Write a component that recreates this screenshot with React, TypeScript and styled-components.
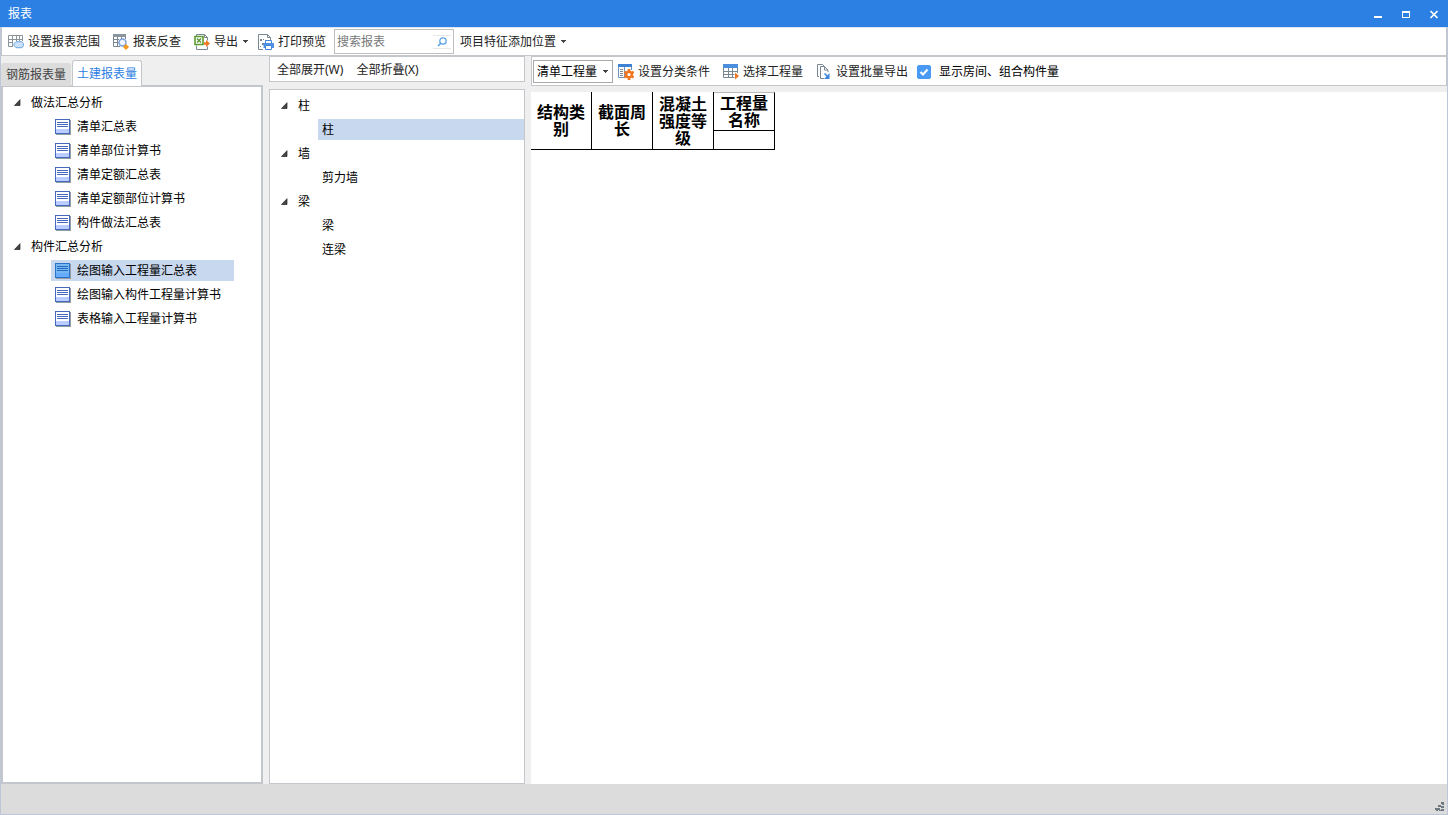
import React, { useState } from 'react';
import styled, { createGlobalStyle } from 'styled-components';

const line = '#c3c7cc';
const frame = '#bfc6d8';
const blue = '#2d80e3';
const highlight = '#c8d8ef';

const GlobalStyle = createGlobalStyle`
  *, *::before, *::after { box-sizing: border-box; }
  body {
    margin: 0;
    background: #efefef;
    color: #000;
    font: 12px/16px "Noto Sans", "Noto Sans CJK SC", sans-serif;
  }
  button, input, select { font: inherit; color: inherit; margin: 0; }
  button { border: 0; background: none; padding: 0; }
  ul { list-style: none; margin: 0; padding: 0; }
  svg { display: block; flex: none; }
`;

const Window = styled.div`
  display: flex;
  flex-direction: column;
  min-height: 100vh;
  border: 1px solid ${frame};
  border-top: 0;
`;

const TitleBar = styled.header`
  display: flex;
  align-items: center;
  justify-content: space-between;
  height: 27px;
  margin: 0 -1px;
  padding: 0 8px;
  background: ${blue};
  color: #fff;
`;

const Title = styled.h1`
  margin: 0;
  font-size: 12px;
  line-height: 16px;
  font-weight: 400;
`;

const WindowButtons = styled.div`
  display: flex;
  gap: 16px;
`;

const WindowButton = styled.button`
  width: 12px;
  height: 14px;
`;

const Toolbar = styled.div`
  display: flex;
  align-items: center;
  gap: 3px;
  height: 29px;
  padding: 0 1px;
  background: #fff;
  border: 1px solid ${line};
  border-top-color: #dfe5ee;
`;

const ToolButton = styled.button<{ $menu?: boolean; $plain?: boolean }>`
  display: flex;
  align-items: center;
  gap: 4px;
  height: 20px;
  padding: 0 ${p => (p.$menu ? 1 : 5)}px 0 ${p => (p.$menu && p.$plain ? 3 : 5)}px;
  color: #222;
  white-space: nowrap;
`;

const SearchBox = styled.form`
  display: flex;
  align-items: center;
  width: 120px;
  height: 25px;
  padding: 0 2px;
  border: 1px solid #bfbfbf;
  background: #fff;
`;

const SearchInput = styled.input`
  flex: 1;
  min-width: 0;
  padding: 0;
  border: 0;
  outline: 0;
  background: none;
  &::placeholder { color: #777; opacity: 1; }
`;

const SearchButton = styled.button`
  display: flex;
  align-items: center;
  justify-content: center;
  width: 18px;
  height: 14px;
  border-top: 1px solid #e8e8e8;
  border-bottom: 1px solid #e8e8e8;
`;

const Main = styled.main`
  flex: 1;
  display: grid;
  grid-template-columns: 262px 256px minmax(0, 1fr);
  column-gap: 6px;
`;

const Column = styled.section`
  display: flex;
  flex-direction: column;
  min-width: 0;
`;

const Tabs = styled.div`
  display: flex;
  align-items: flex-end;
  height: 30px;
  gap: 1px;
`;

const Tab = styled.button<{ $active?: boolean }>`
  position: relative;
  width: 70px;
  height: ${p => (p.$active ? 26 : 23)}px;
  z-index: ${p => (p.$active ? 1 : 0)};
  border: ${p => (p.$active ? `1px solid ${line}` : '0')};
  border-bottom: 0;
  border-radius: 3px 3px 0 0;
  background: ${p => (p.$active ? '#fff' : '#dcdcdc')};
  color: ${p => (p.$active ? blue : '#444')};
`;

const ReportPanel = styled.div`
  flex: 1;
  margin-top: -1px;
  padding: 4px 0 0;
  border: 2px solid ${line};
  background: #fff;
`;

const SubToolbar = styled.div<{ $height: number }>`
  display: flex;
  align-items: center;
  height: ${p => p.$height}px;
  padding: 1px 2px 0;
  gap: 3px;
  background: #fff;
  border: 1px solid ${line};
`;

const ComponentPanel = styled.div`
  flex: 1;
  margin-top: 7px;
  padding: 4px 0 0;
  border: 1px solid ${line};
  background: #fff;
`;

const GroupButton = styled.button`
  display: flex;
  align-items: center;
  gap: 10px;
  height: 24px;
  padding-left: 11px;
`;

const Items = styled.ul<{ $indent: number; $right: number }>`
  padding-left: ${p => p.$indent}px;
  padding-right: ${p => p.$right}px;
`;

const Item = styled.li`
  padding: 1px 0 2px;
`;

const ItemButton = styled.button<{ $selected?: boolean }>`
  display: flex;
  align-items: center;
  gap: 6px;
  width: 100%;
  height: 21px;
  padding-left: 4px;
  white-space: nowrap;
  background: ${p => (p.$selected ? highlight : 'transparent')};
`;

const SelectWrap = styled.div`
  display: grid;
  width: 80px;
  margin: 0 -3px 0 -1px;
  align-items: center;
`;

const QuantitySelect = styled.select`
  grid-area: 1 / 1;
  height: 23px;
  padding: 0 12px 0 3px;
  border: 1px solid #a9a9a9;
  border-radius: 0;
  background: #fff;
  appearance: none;
`;

const SelectArrow = styled.span`
  grid-area: 1 / 1;
  justify-self: end;
  padding-right: 4px;
  pointer-events: none;
`;

const CheckLabel = styled.label`
  display: flex;
  align-items: center;
  gap: 8px;
  padding-left: 1px;
  white-space: nowrap;
`;

const CheckBox = styled.input`
  appearance: none;
  width: 14px;
  height: 14px;
  border-radius: 2px;
  border: 1px solid #4a9af5;
  background: #fff;
  &:checked {
    background: #4a9af5 url("data:image/svg+xml,%3Csvg xmlns='http://www.w3.org/2000/svg' viewBox='0 0 12 12'%3E%3Cpath d='M2.5 6 5 8.500 9.500 3.500' fill='none' stroke='white' stroke-width='2'/%3E%3C/svg%3E") center / 12px no-repeat;
  }
`;

const Sheet = styled.div`
  flex: 1;
  margin-top: 6px;
  background: #fff;
`;

const ReportTable = styled.table`
  width: 244px;
  table-layout: fixed;
  border-spacing: 0;
`;

const HeadCell = styled.th<{ $height: number; $top?: boolean }>`
  height: ${p => p.$height}px;
  padding: 0 6px 1px;
  border: 0 solid #000;
  border-width: ${p => (p.$top ? '1px 1px 1px 0' : '0 1px 1px 0')};
  border-top-color: #bbb;
  font: bold 16px/17px "Noto Sans CJK SC", sans-serif;
  word-break: break-all;
`;

const StatusBar = styled.footer`
  display: flex;
  align-items: flex-end;
  justify-content: flex-end;
  height: 30px;
  padding: 2px;
  background: #dcdcdd;
`;

const Caret = () => (
  <svg width="7" height="4" viewBox="0 0 7 4" shapeRendering="crispEdges">
    <path d="M1 0h5v1H1zM2 1h3v1H2zM3 2h1v1H3z" fill="#444" />
  </svg>
);

const Expander = () => (
  <svg width="7" height="8" viewBox="0 0 7 8"><path d="M6 0.700v5.800H0.500z" fill="#444" stroke="#222" strokeWidth="0.700" /></svg>
);

const RangeIcon = () => (
  <svg width="16" height="16" viewBox="0 0 16 16" fill="none">
    <path d="M.5 1.500h14v11h-14zM.5 5.500h14M.5 8.500h14M4.500 1.500v11M8.500 1.500v11M11.500 1.500v11" stroke="#8a949c" />
    <path d="M5 7h11v7H5z" fill="#fff" />
    <path d="M8 7.700h6l1.500 2v2l-1.500 2H8l-2-2v-2z" fill="#c9e0f8" stroke="#6ea6df" />
  </svg>
);

const TraceIcon = () => (
  <svg width="16" height="16" viewBox="0 0 16 16" fill="none">
    <path d="M.5 1v11.500H7M.5 5.500H6M.5 8.500h5M4.500 3v9.500M8.500 3v2M12.500 1v4" stroke="#7b8790" />
    <path d="M0 0h13v3H0z" fill="#8a949c" />
    <circle cx="9.500" cy="8.500" r="3.500" fill="#eef5ff" stroke="#7d9fdc" strokeWidth="1.500" />
    <path d="m13 10 3 3-3 3-3-3z" fill="#f39a1f" />
  </svg>
);

const ExportIcon = () => (
  <svg width="16" height="16" viewBox="0 0 16 16" fill="none">
    <path d="M2.500 2.500v-2h8l3 3v3M10.500.5v3h3M2.500 11.500v4h11v-3" stroke="#7b8790" />
    <path d="M1 2.500h8v8H1z" fill="#fff" stroke="#5d9b33" strokeWidth="1.600" />
    <path d="m3 4.500 4 4m0-4-4 4" stroke="#5d9b33" strokeWidth="1.500" />
    <path d="M10 8.300h2V6l4 3.500-4 3.500v-2.300h-2z" fill="#f07622" />
  </svg>
);

const PrintIcon = () => (
  <svg width="16" height="16" viewBox="0 0 16 16" fill="none">
    <path d="M5 15.500H.5V.5h9l3 3V6M9.500.5v3h3" stroke="#7b8790" />
    <path d="M2 5h2v2H2zm2 4h2v2H4zm-2 3h1v1H2zm3-7h1v1H5z" fill="#7b8790" />
    <path d="M7.500 9V6.500h6V9" fill="#fff" stroke="#4386dc" />
    <path d="M5.500 9h10.500v5H5.500z" fill="#4e91e4" />
    <path d="M7.500 11.500h6v4h-6z" fill="#fff" stroke="#4386dc" />
  </svg>
);

const ClassifyIcon = () => (
  <svg width="16" height="16" viewBox="0 0 16 16" fill="none">
    <path d="M.5 1v12.500h6M13.500 1v5M6.500 3v10.500" stroke="#6f93c0" />
    <path d="M2 5.500h3M2 7.500h3M2 9.500h3M2 11.500h3" stroke="#7b8790" />
    <path d="M0 0h14v3H0z" fill="#3f83d6" />
    <path d="M11 5v11M6.300 7.800l9.400 5.500M15.700 7.800l-9.400 5.500" stroke="#f07622" strokeWidth="2.600" />
    <circle cx="11" cy="10.500" r="2.800" fill="#fff" stroke="#f07622" strokeWidth="2.400" />
  </svg>
);

const PickIcon = () => (
  <svg width="16" height="16" viewBox="0 0 16 16" fill="none">
    <path d="M.5 4v9.500h11M14.500 4v5M.5 7.500h14M.5 10.500h11M5.500 4v10M9.500 4v10" stroke="#7b8790" />
    <path d="M0 0h15v4H0z" fill="#4a8edd" />
    <path d="M12 8.500v7l4-3.500z" fill="#f07622" />
  </svg>
);

const BatchIcon = () => (
  <svg width="16" height="16" viewBox="0 0 16 16" fill="none">
    <path d="M3 12.500H1.500V.5h5L8 2" stroke="#7b8790" />
    <path d="M8 14.500H4.500v-12h4l3.500 3.500V8M8.500 2.500V6H12" stroke="#7b8790" />
    <path d="M8.500 9.500 12 13" stroke="#4386dc" strokeWidth="1.600" />
    <path d="M13.500 9v6H8z" fill="#4386dc" />
  </svg>
);

const ReportIcon = ({ active }: { active?: boolean }) => (
  <svg width="16" height="16" viewBox="0 0 16 16" shapeRendering="crispEdges">
    <path d="M1 1h15v15H1z" fill="#969ba8" />
    <path d="M0 0h15v15H0z" fill={active ? '#2872c7' : '#4668bd'} />
    <path d="M1 1h13v9H1z" fill={active ? '#79b7f3' : '#fff'} />
    <path d="M1 10h13v4H1z" fill={active ? '#65adfa' : '#b9ceff'} />
    <path d="M2 3h11v1H2zm0 2h11v1H2zm0 2h11v1H2z" fill={active ? '#226ac0' : '#4668bd'} />
  </svg>
);

interface Group { name: string; items: string[] }

const reports: Group[] = [
  { name: '做法汇总分析', items: ['清单汇总表', '清单部位计算书', '清单定额汇总表', '清单定额部位计算书', '构件做法汇总表'] },
  { name: '构件汇总分析', items: ['绘图输入工程量汇总表', '绘图输入构件工程量计算书', '表格输入工程量计算书'] },
];

const components: Group[] = [
  { name: '柱', items: ['柱'] },
  { name: '墙', items: ['剪力墙'] },
  { name: '梁', items: ['梁', '连梁'] },
];

interface TreeProps { groups: Group[]; initial: string; indent: number; right?: number; icons?: boolean }

function Tree({ groups, initial, indent, right = 0, icons }: TreeProps) {
  const [selected, setSelected] = useState(initial);
  const [closed, setClosed] = useState<string[]>([]);
  const toggle = (name: string) =>
    setClosed(c => (c.includes(name) ? c.filter(n => n !== name) : [...c, name]));
  return (
    <ul>
      {groups.map(group => (
        <li key={group.name}>
          <GroupButton aria-expanded={!closed.includes(group.name)} onClick={() => toggle(group.name)}>
            <Expander />{group.name}
          </GroupButton>
          {!closed.includes(group.name) && (
            <Items $indent={indent} $right={right}>
              {group.items.map(item => (
                <Item key={item}>
                  <ItemButton $selected={item === selected} onClick={() => setSelected(item)}>
                    {icons && <ReportIcon active={item === selected} />}{item}
                  </ItemButton>
                </Item>
              ))}
            </Items>
          )}
        </li>
      ))}
    </ul>
  );
}

export default function App() {
  return (
    <Window>
      <GlobalStyle />
      <TitleBar>
        <Title>报表</Title>
        <WindowButtons>
          <WindowButton aria-label="最小化">
            <svg width="12" height="12"><path d="M2 8h8v2H2z" fill="#fff" /></svg>
          </WindowButton>
          <WindowButton aria-label="最大化">
            <svg width="12" height="12"><path d="M2 3h8v7H2zm1 2v4h6V5z" fill="#fff" fillRule="evenodd" /></svg>
          </WindowButton>
          <WindowButton aria-label="关闭">
            <svg width="12" height="12"><path d="m2.500 3 7 7m0-7-7 7" stroke="#fff" strokeWidth="1.700" /></svg>
          </WindowButton>
        </WindowButtons>
      </TitleBar>

      <Toolbar>
        <ToolButton><RangeIcon />设置报表范围</ToolButton>
        <ToolButton><TraceIcon />报表反查</ToolButton>
        <ToolButton $menu><ExportIcon />导出<Caret /></ToolButton>
        <ToolButton><PrintIcon />打印预览</ToolButton>
        <SearchBox role="search" onSubmit={e => e.preventDefault()}>
          <SearchInput aria-label="搜索报表" placeholder="搜索报表" />
          <SearchButton aria-label="搜索">
            <svg width="10" height="10" viewBox="0 0 10 10" fill="none" stroke="#5aa2e6">
              <circle cx="6" cy="4" r="3.200" strokeWidth="1.300" /><path d="M3.500 6.500 1 9" strokeWidth="1.600" />
            </svg>
          </SearchButton>
        </SearchBox>
        <ToolButton $menu $plain>项目特征添加位置<Caret /></ToolButton>
      </Toolbar>

      <Main>
        <Column>
          <Tabs role="tablist">
            <Tab role="tab" aria-selected={false}>钢筋报表量</Tab>
            <Tab role="tab" aria-selected $active>土建报表量</Tab>
          </Tabs>
          <ReportPanel>
            <Tree groups={reports} initial="绘图输入工程量汇总表" indent={48} right={27} icons />
          </ReportPanel>
        </Column>

        <Column>
          <SubToolbar $height={26}>
            <ToolButton>全部展开(W)</ToolButton>
            <ToolButton>全部折叠(X)</ToolButton>
          </SubToolbar>
          <ComponentPanel>
            <Tree groups={components} initial="柱" indent={48} />
          </ComponentPanel>
        </Column>

        <Column>
          <SubToolbar $height={30}>
            <SelectWrap>
              <QuantitySelect aria-label="工程量类型" defaultValue="清单工程量">
                <option>清单工程量</option>
                <option>定额工程量</option>
              </QuantitySelect>
              <SelectArrow><Caret /></SelectArrow>
            </SelectWrap>
            <ToolButton><ClassifyIcon />设置分类条件</ToolButton>
            <ToolButton><PickIcon />选择工程量</ToolButton>
            <ToolButton><BatchIcon />设置批量导出</ToolButton>
            <CheckLabel><CheckBox type="checkbox" defaultChecked />显示房间、组合构件量</CheckLabel>
          </SubToolbar>
          <Sheet>
            <ReportTable>
              <thead>
                <tr>
                  <HeadCell $height={58} rowSpan={2}>结构类别</HeadCell>
                  <HeadCell $height={58} rowSpan={2}>截面周长</HeadCell>
                  <HeadCell $height={58} rowSpan={2}>混凝土强度等级</HeadCell>
                  <HeadCell $height={39} $top>工程量名称</HeadCell>
                </tr>
                <tr><HeadCell $height={19} /></tr>
              </thead>
            </ReportTable>
          </Sheet>
        </Column>
      </Main>

      <StatusBar>
        <svg width="10" height="10" viewBox="0 0 10 10" shapeRendering="crispEdges" fill="#6f7780">
          <path d="M6 0h3v2H6zM7 2h2v1H7zM3 3h3v2H3zM6 4h3v2H6zM0 6h3v2H0zM3 6h2v2H3zM6 7h3v2H6zM1 8h2v1H1zM4 8h2v1H4z" />
        </svg>
      </StatusBar>
    </Window>
  );
}
